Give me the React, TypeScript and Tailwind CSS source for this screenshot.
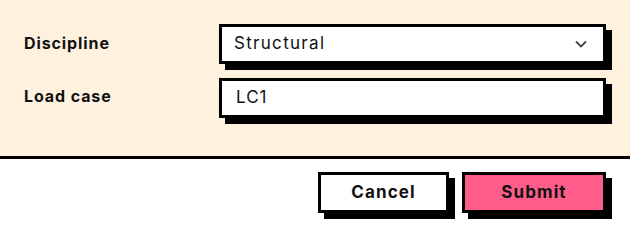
import React from "react";

export default function App() {
  const font = { fontFamily: "Inter, 'Liberation Sans', sans-serif" };
  return (
    <div className="w-[630px] h-[232px] bg-white text-[#111]" style={font}>
      <div className="bg-[#fef1de] border-b-[3px] border-black px-6 pt-6 pb-[38px] flex flex-col gap-[14px]">
        <div className="flex items-center">
          <div className="w-[195px] text-[16px] font-bold tracking-[0.9px] -mt-[2px]">Discipline</div>
          <div className="flex-1 h-10 bg-white border-[3px] border-black shadow-[6px_6px_0_#000] flex items-center justify-between pl-[12px] pr-[16px]">
            <span className="text-[17px] tracking-[1.3px]">Structural</span>
            <svg width="12" height="8" viewBox="0 0 12 8" fill="none">
              <path d="M1 1.5 L6 6.5 L11 1.5" stroke="#444" strokeWidth="1.8" />
            </svg>
          </div>
        </div>
        <div className="flex items-center">
          <div className="w-[195px] text-[16px] font-bold tracking-[0.9px] -mt-[4px]">Load case</div>
          <div className="flex-1 h-10 bg-white border-[3px] border-black shadow-[6px_6px_0_#000] flex items-center pl-[14px]">
            <span className="text-[17px] tracking-[1px]">LC1</span>
          </div>
        </div>
      </div>
      <div className="flex justify-end gap-[13px] px-6 pt-[13px]">
        <button className="w-[131px] h-[41px] bg-white border-[3px] border-black shadow-[6px_6px_0_#000] text-[17px] font-bold tracking-[1.1px]">
          Cancel
        </button>
        <button className="w-[144px] h-[41px] bg-[#ff5c8a] border-[3px] border-black shadow-[6px_6px_0_#000] text-[17px] font-bold tracking-[1.1px]">
          Submit
        </button>
      </div>
    </div>
  );
}
